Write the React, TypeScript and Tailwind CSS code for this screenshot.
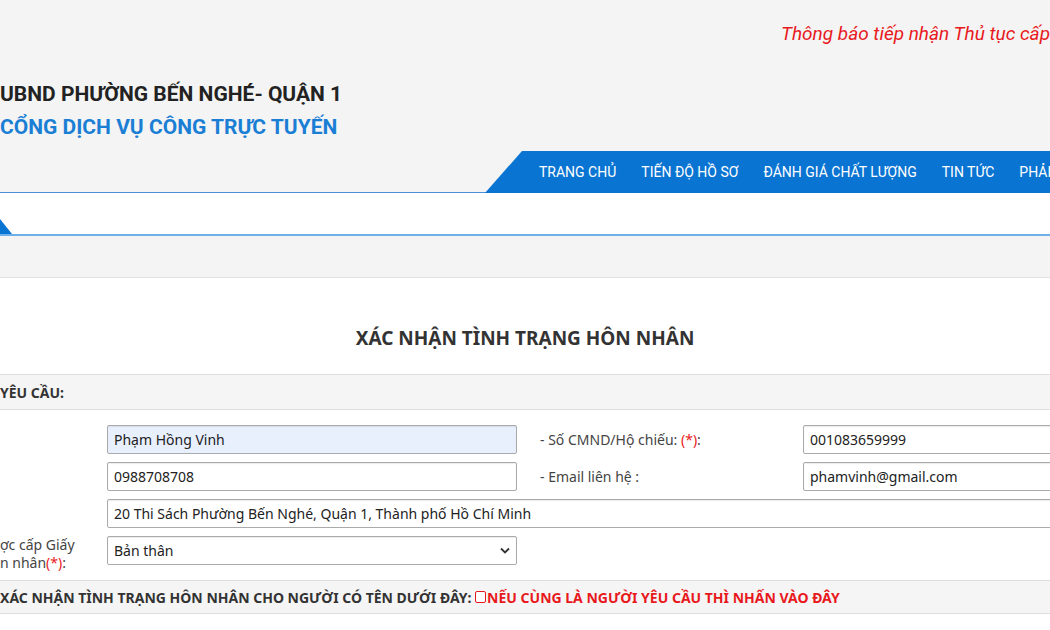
export default function App() {
  const input = "h-[29px] border border-[#aaa] rounded-[2px] px-[6px] flex items-center text-[14px] text-[#222] shadow-[inset_0_1px_1px_rgba(0,0,0,0.08)]";
  return (
    <div className="w-[1050px] h-[630px] overflow-hidden bg-white [font-family:'Liberation_Sans',Arial,sans-serif]">
      <div className="h-[193px] bg-[#f4f4f4] relative border-b border-[#4a90d9] [font-family:Roboto,sans-serif]">
        <div className="absolute right-0 top-[20px] text-[#e8191d] italic text-[19px] whitespace-nowrap">Thông báo tiếp nhận Thủ tục cấp</div>
        <div className="absolute left-0 top-[79px] text-[21px] font-bold text-[#222] whitespace-nowrap">UBND PHƯỜNG BẾN NGHÉ- QUẬN 1</div>
        <div className="absolute left-0 top-[112px] text-[21px] font-bold text-[#1a7fd4] whitespace-nowrap">CỔNG DỊCH VỤ CÔNG TRỰC TUYẾN</div>
        <div className="absolute left-[485px] right-0 top-[151px] h-[42px] bg-[#0a74d2] [clip-path:polygon(37px_0,100%_0,100%_100%,0_100%)] flex items-center pl-[54px] gap-[25px] text-white text-[14px] whitespace-nowrap overflow-hidden">
          <span>TRANG CHỦ</span><span>TIẾN ĐỘ HỒ SƠ</span><span>ĐÁNH GIÁ CHẤT LƯỢNG</span><span>TIN TỨC</span><span>PHẢN ÁNH</span>
        </div>
      </div>
      <div className="h-[43px] bg-white border-b-2 border-[#6fb0e8] relative">
        <div className="absolute left-0 bottom-0 w-[12px] h-[15px] bg-[#0a74d2] [clip-path:polygon(0_0,100%_100%,0_100%)]"></div>
      </div>
      <div className="h-[42px] bg-[#f4f4f4] border-b border-[#e2e2e2]"></div>
      <div className="pt-[46px] text-center text-[19px] font-bold text-[#333] h-[96px]">XÁC NHẬN TÌNH TRẠNG HÔN NHÂN</div>
      <div className="h-[36px] bg-[#f5f5f5] border-y border-[#ddd] flex items-center text-[14px] font-bold text-[#333]">YÊU CẦU:</div>
      <div className="pt-[15px] flex flex-col gap-[8px] text-[14px] text-[#444]">
        <div className="flex items-start">
          <div className={input + " ml-[107px] w-[410px] bg-[#e8f0fe]"}>Phạm Hồng Vinh</div>
          <div className="w-[286px] pl-[23px] pt-[4px]">- Số CMND/Hộ chiếu: <span className="text-[#e8191d]">(*)</span>:</div>
          <div className={input + " flex-1 -mr-[2px]"}>001083659999</div>
        </div>
        <div className="flex items-start">
          <div className={input + " ml-[107px] w-[410px]"}>0988708708</div>
          <div className="w-[286px] pl-[23px] pt-[4px]">- Email liên hệ :</div>
          <div className={input + " flex-1 -mr-[2px]"}>phamvinh@gmail.com</div>
        </div>
        <div className="flex">
          <div className={input + " ml-[107px] flex-1 -mr-[2px]"}>20 Thi Sách Phường Bến Nghé, Quận 1, Thành phố Hồ Chí Minh</div>
        </div>
        <div className="flex items-start relative h-[40px]">
          <div className="absolute left-0 top-[0px] leading-[18px] text-[14px]">ợc cấp Giấy<br/>n nhân<span className="text-[#e8191d]">(*)</span>:</div>
          <div className={input + " ml-[107px] w-[410px] justify-between"}>
            <span>Bản thân</span>
            <svg width="10" height="7" viewBox="0 0 10 7"><path d="M1 1.5 L5 5.5 L9 1.5" stroke="#333" strokeWidth="1.8" fill="none"/></svg>
          </div>
        </div>
      </div>
      <div className="mt-[4px] h-[34px] bg-[#f5f5f5] border-y border-[#ddd] flex items-center text-[14px] font-bold text-[#333] whitespace-nowrap">
        XÁC NHẬN TÌNH TRẠNG HÔN NHÂN CHO NGƯỜI CÓ TÊN DƯỚI ĐÂY:&nbsp;
        <span className="inline-block w-[11px] h-[12px] border-[1.5px] border-[#e8191d] rounded-[2px] bg-white mr-[1px]"></span>
        <span className="text-[#e8191d]">NẾU CÙNG LÀ NGƯỜI YÊU CẦU THÌ NHẤN VÀO ĐÂY</span>
      </div>
    </div>
  );
}
